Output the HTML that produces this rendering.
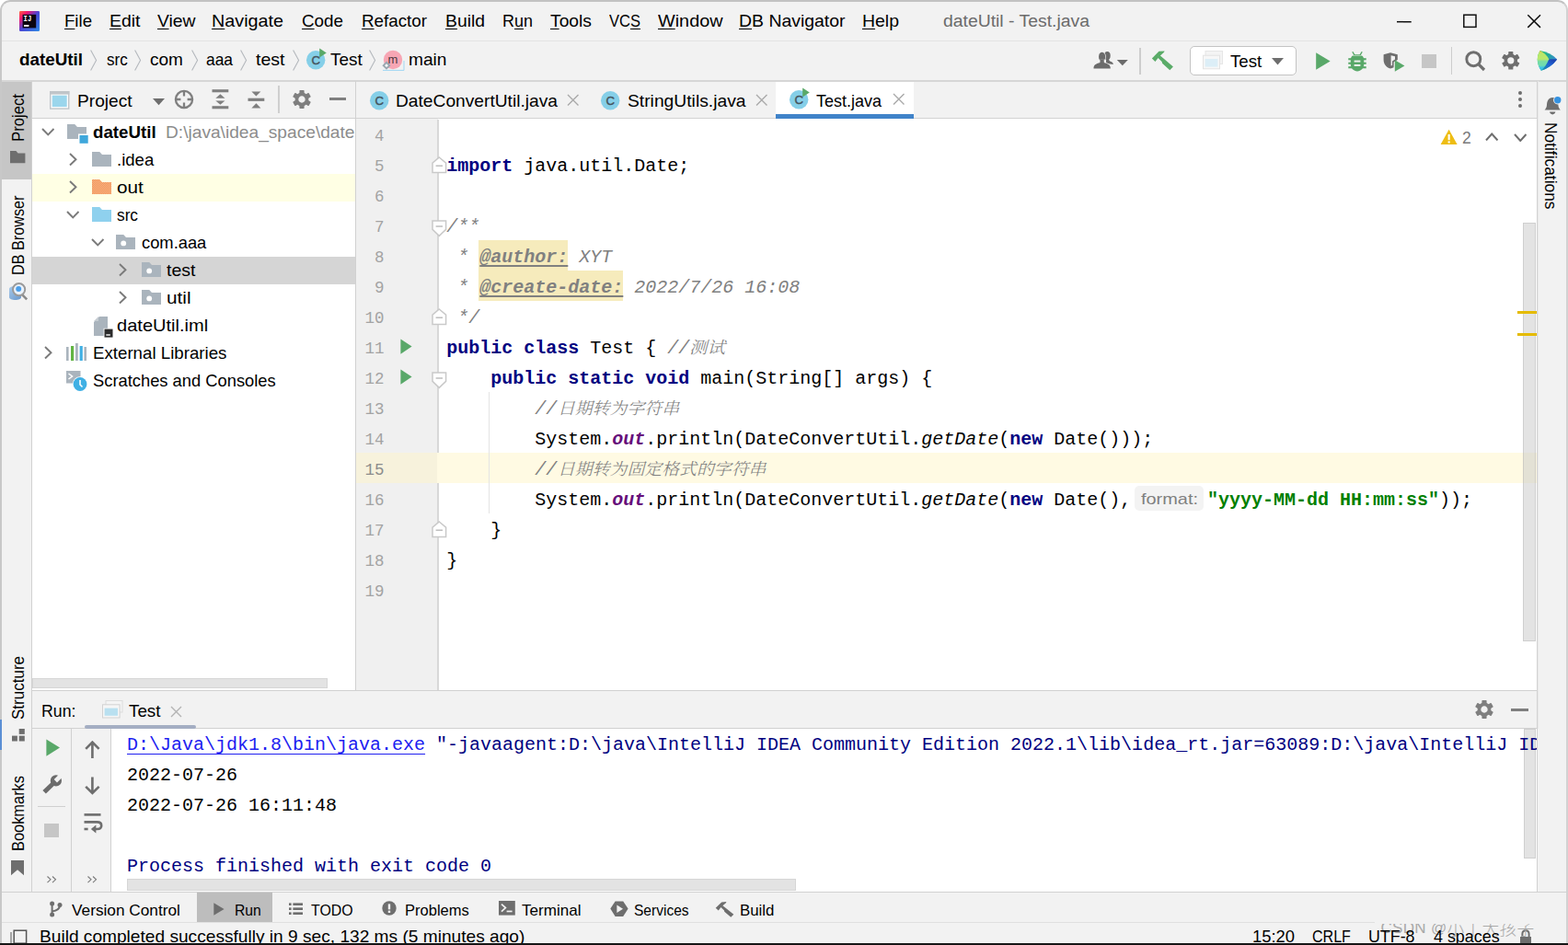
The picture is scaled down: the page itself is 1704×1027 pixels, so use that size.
<!DOCTYPE html>
<html lang="zh"><head><meta charset="utf-8"><title>dateUtil - Test.java</title>
<style>
html,body{margin:0;padding:0;background:#fff;}
body{width:1704px;height:1027px;overflow:hidden;position:relative;}
#win{position:absolute;left:0;top:0;width:1704px;height:1027px;overflow:hidden;background:#f2f2f2;border-radius:11px 11px 0 0;}
#win div,#win svg,#win span.t{position:absolute;}
span.t{white-space:pre;line-height:normal;transform-origin:0 0;}

</style></head>
<body>
<div id="win">
<div style="left:0px;top:44px;width:1704px;height:1px;background:#e3e3e3;"></div>
<div style="left:0px;top:87px;width:1704px;height:2px;background:#d6d6d6;"></div>
<div style="left:34px;top:88px;width:1px;height:882px;background:#d1d1d1;"></div>
<div style="left:2px;top:89px;width:32px;height:105.5px;background:#c6c6c6;"></div>
<div style="left:35px;top:128px;width:352px;height:1px;background:#d1d1d1;"></div>
<div style="left:35px;top:129px;width:351px;height:621px;background:#fff;"></div>
<div style="left:386px;top:88px;width:1px;height:663px;background:#d1d1d1;"></div>
<div style="left:35px;top:189px;width:351px;height:30px;background:#ffffe4;"></div>
<div style="left:35px;top:279px;width:351px;height:30px;background:#d5d5d5;"></div>
<div style="left:35px;top:735px;width:351px;height:15px;background:#fff;"></div>
<div style="left:35px;top:737px;width:321px;height:11px;background:#e3e3e3;border:1px solid #d6d6d6;box-sizing:border-box;"></div>
<div style="left:35px;top:750px;width:1636px;height:1px;background:#d1d1d1;"></div>
<div style="left:387px;top:128px;width:1284px;height:2px;background:#d3d3d3;"></div>
<div style="left:843px;top:89px;width:150px;height:35px;background:#fff;"></div>
<div style="left:843px;top:124px;width:150px;height:5px;background:#4083c9;"></div>
<div style="left:387px;top:129px;width:1284px;height:621px;background:#fff;"></div>
<div style="left:387px;top:129px;width:89px;height:621px;background:#f0f0f0;"></div>
<div style="left:475px;top:130px;width:2px;height:620px;background:#d8d8d8;"></div>
<div style="left:387px;top:492px;width:1283px;height:33px;background:#fffae3;"></div>
<div style="left:387px;top:492px;width:88px;height:33px;background:#f7f2dc;"></div>
<div style="left:531px;top:426px;width:1px;height:132px;background:#e4e4e4;"></div>
<div style="left:520px;top:261px;width:97px;height:33px;background:#f6ebbc;"></div>
<div style="left:520px;top:294px;width:157px;height:33px;background:#f6ebbc;"></div>
<div style="left:1233px;top:528px;width:75px;height:27px;background:#f3f3f3;border-radius:5px;"></div>
<div style="left:1655px;top:242px;width:14px;height:455px;background:rgba(200,200,200,0.5);border:1px solid rgba(170,170,170,0.35);box-sizing:border-box;"></div>
<div style="left:1649px;top:338px;width:21px;height:3px;background:#e5bb00;"></div>
<div style="left:1649px;top:362px;width:21px;height:3px;background:#e5bb00;"></div>
<div style="left:1670px;top:88px;width:1px;height:882px;background:#d3d3d3;"></div>
<div style="left:1671px;top:88px;width:1px;height:882px;background:#e8e8e8;"></div>
<div style="left:35px;top:791px;width:1636px;height:1px;background:#d1d1d1;"></div>
<div style="left:77px;top:792px;width:1px;height:177px;background:#d1d1d1;"></div>
<div style="left:120px;top:792px;width:1px;height:177px;background:#d1d1d1;"></div>
<div style="left:121px;top:792px;width:1549px;height:177px;background:#fff;"></div>
<div style="left:92px;top:788px;width:121px;height:4px;background:#a4aec3;border-radius:2px;"></div>
<div style="left:41px;top:876px;width:30px;height:1px;background:#cfcfcf;"></div>
<div style="left:1656px;top:792px;width:13px;height:141px;background:rgba(200,200,200,0.5);border:1px solid rgba(170,170,170,0.35);box-sizing:border-box;"></div>
<div style="left:138px;top:955px;width:727px;height:13px;background:#e3e3e3;border:1px solid #d6d6d6;box-sizing:border-box;"></div>
<div style="left:0px;top:969px;width:1704px;height:1px;background:#d1d1d1;"></div>
<div style="left:214px;top:970px;width:82px;height:32px;background:#bdbdbd;"></div>
<div style="left:0px;top:1002px;width:1494px;height:1px;background:#e0e0e0;"></div>
<div style="left:0px;top:1025px;width:1704px;height:2px;background:#161616;"></div>
<div style="left:1238.3px;top:51.5px;width:1.4px;height:29.5px;background:#cdcdcd;"></div>
<div style="left:1292.5px;top:50px;width:116px;height:32px;background:#fff;border:1.5px solid #c4c4c4;border-radius:5px;box-sizing:border-box;"></div>
<div style="left:1545.3px;top:58.5px;width:15.5px;height:15px;background:#c6c6c6;"></div>
<div style="left:1577px;top:51px;width:1.4px;height:30px;background:#cdcdcd;"></div>
<div style="left:302.3px;top:93px;width:1.4px;height:29.6px;background:#cfcfcf;"></div>
<div style="left:358px;top:106.2px;width:18px;height:3.2px;background:#7f7f7f;"></div>
<div style="left:1649.8px;top:98.8px;width:4.4px;height:4.4px;background:#6e6e6e;border-radius:50%;"></div>
<div style="left:1649.8px;top:105.7px;width:4.4px;height:4.4px;background:#6e6e6e;border-radius:50%;"></div>
<div style="left:1649.8px;top:112.6px;width:4.4px;height:4.4px;background:#6e6e6e;border-radius:50%;"></div>
<div style="left:1642px;top:769.5px;width:18.5px;height:3px;background:#7f7f7f;"></div>
<div style="left:48.2px;top:894.5px;width:15.6px;height:15px;background:#c6c6c6;"></div>
<svg style="left:45px;top:138.7px;" width="14.5" height="9" viewBox="0 0 14.5 9"><path d="M1 1 L7.25 7.5 L13.5 1" fill="none" stroke="#7a7a7a" stroke-width="1.9" stroke-linecap="butt"/></svg>
<svg style="left:72.5px;top:135px;" width="23" height="21" viewBox="0 0 23 21"><path d="M0 0 H8.2 L11 3 H21 V16 H0 Z" fill="#aab4bd"/><rect x="12.3" y="11" width="10.7" height="10" fill="#f2f2f2" opacity="0"/><rect x="12" y="10.5" width="11" height="10.5" fill="#fff"/><rect x="13.5" y="12" width="9.2" height="8.8" fill="#3fa7db"/></svg>
<svg style="left:75px;top:166px;" width="9" height="14.5" viewBox="0 0 9 14.5"><path d="M1 1 L7.5 7.25 L1 13.5" fill="none" stroke="#7a7a7a" stroke-width="1.9"/></svg>
<svg style="left:99.6px;top:165px;" width="21" height="16" viewBox="0 0 21 16"><path d="M0 0 H8.2 L11 3 H21 V16 H0 Z" fill="#aab4bd"/></svg>
<svg style="left:75px;top:196px;" width="9" height="14.5" viewBox="0 0 9 14.5"><path d="M1 1 L7.5 7.25 L1 13.5" fill="none" stroke="#7a7a7a" stroke-width="1.9"/></svg>
<svg style="left:99.6px;top:195px;" width="21" height="16" viewBox="0 0 21 16"><defs><pattern id="po" width="2" height="2" patternUnits="userSpaceOnUse"><rect width="2" height="2" fill="#f2975c"/><rect width="1" height="1" fill="#f7b183"/><rect x="1" y="1" width="1" height="1" fill="#f7b183"/></pattern></defs><path d="M0 0 H8.2 L11 3 H21 V16 H0 Z" fill="url(#po)"/></svg>
<svg style="left:72.3px;top:228.7px;" width="14.5" height="9" viewBox="0 0 14.5 9"><path d="M1 1 L7.25 7.5 L13.5 1" fill="none" stroke="#7a7a7a" stroke-width="1.9" stroke-linecap="butt"/></svg>
<svg style="left:99.6px;top:225px;" width="21" height="16" viewBox="0 0 21 16"><path d="M0 0 H8.2 L11 3 H21 V16 H0 Z" fill="#8fd1ee"/></svg>
<svg style="left:99px;top:258.8px;" width="14.5" height="9" viewBox="0 0 14.5 9"><path d="M1 1 L7.25 7.5 L13.5 1" fill="none" stroke="#7a7a7a" stroke-width="1.9" stroke-linecap="butt"/></svg>
<svg style="left:126.3px;top:255.3px;" width="21" height="16" viewBox="0 0 21 16"><path d="M0 0 H8.2 L11 3 H21 V16 H0 Z" fill="#aab4bd"/><circle cx="8.2" cy="9.4" r="2.9" fill="#fff"/></svg>
<svg style="left:128.6px;top:286px;" width="9" height="14.5" viewBox="0 0 9 14.5"><path d="M1 1 L7.5 7.25 L1 13.5" fill="none" stroke="#7a7a7a" stroke-width="1.9"/></svg>
<svg style="left:153.6px;top:285.2px;" width="21" height="16" viewBox="0 0 21 16"><path d="M0 0 H8.2 L11 3 H21 V16 H0 Z" fill="#aab4bd"/><circle cx="8.2" cy="9.4" r="2.9" fill="#fff"/></svg>
<svg style="left:128.6px;top:316px;" width="9" height="14.5" viewBox="0 0 9 14.5"><path d="M1 1 L7.5 7.25 L1 13.5" fill="none" stroke="#7a7a7a" stroke-width="1.9"/></svg>
<svg style="left:153.6px;top:315.2px;" width="21" height="16" viewBox="0 0 21 16"><path d="M0 0 H8.2 L11 3 H21 V16 H0 Z" fill="#aab4bd"/><circle cx="8.2" cy="9.4" r="2.9" fill="#fff"/></svg>
<svg style="left:102px;top:343.5px;" width="21" height="23" viewBox="0 0 21 23"><path d="M6 0 H15 V21 H0 V6 Z" fill="#aab4bd"/><path d="M0 5 L5 0 V5 Z" fill="#c5ccd2"/><rect x="10.5" y="12.5" width="10.5" height="10.5" fill="#f2f2f2" opacity="0"/><rect x="10.6" y="12.8" width="10" height="10" fill="#fff"/><rect x="11.5" y="13.6" width="9" height="9" fill="#2b2b2b"/><rect x="13.3" y="19.3" width="4.5" height="1.4" fill="#fff"/></svg>
<svg style="left:47.6px;top:376.3px;" width="9" height="14.5" viewBox="0 0 9 14.5"><path d="M1 1 L7.5 7.25 L1 13.5" fill="none" stroke="#7a7a7a" stroke-width="1.9"/></svg>
<svg style="left:72.4px;top:373px;" width="22" height="19" viewBox="0 0 22 19"><rect x="0" y="4" width="2.6" height="15" fill="#aab4bd"/><rect x="5" y="3" width="3.2" height="16" fill="#62b543"/><rect x="10" y="0" width="2.8" height="19" fill="#aab4bd"/><rect x="14.6" y="3" width="3.2" height="16" fill="#40b0e4"/><rect x="19.4" y="4" width="2.6" height="15" fill="#aab4bd"/></svg>
<svg style="left:72.4px;top:403px;" width="23" height="23" viewBox="0 0 23 23"><rect x="0" y="0" width="15.5" height="13.5" fill="#aab4bd"/><path d="M2.5 3 L6.5 6 L2.5 9" stroke="#fff" stroke-width="1.5" fill="none"/><circle cx="15" cy="14.5" r="8.3" fill="#fff"/><circle cx="15" cy="14.5" r="7.4" fill="#40b0e4"/><path d="M15 10 V15 L17.5 17.5" stroke="#fff" stroke-width="1.6" fill="none"/></svg>
<svg style="left:21px;top:12px;" width="22" height="22" viewBox="0 0 22 22"><defs><linearGradient id="ijg" x1="0" y1="0" x2="1" y2="1"><stop offset="0" stop-color="#fe6a3a"/><stop offset="0.22" stop-color="#f3156f"/><stop offset="0.5" stop-color="#4a46d6"/><stop offset="1" stop-color="#2f8be6"/></linearGradient></defs><rect width="22" height="22" rx="1.2" fill="url(#ijg)"/><rect x="3.6" y="3.8" width="14.6" height="14.6" fill="#0b0410"/><rect x="5" y="15" width="5.4" height="1.9" fill="#fff"/><text x="4.6" y="11.3" font-family="Liberation Mono,monospace" font-weight="bold" font-size="8.6" fill="#fff" textLength="8.6" lengthAdjust="spacingAndGlyphs">IJ</text></svg>
<svg style="left:1517px;top:14px;" width="160" height="18" viewBox="0 0 160 18"><path d="M1 9.7 H16.7" stroke="#111" stroke-width="1.5"/><rect x="73.8" y="2.2" width="13.2" height="13.2" fill="none" stroke="#111" stroke-width="1.5"/><path d="M143.3 2.2 L157 15.9 M157 2.2 L143.3 15.9" stroke="#111" stroke-width="1.5"/></svg>
<svg style="left:98px;top:54px;" width="8" height="23" viewBox="0 0 8 23"><path d="M0.6 0.5 L6.6 11.5 L0.6 22.5" fill="none" stroke="#b4b8bd" stroke-width="1.1"/></svg>
<svg style="left:146px;top:54px;" width="8" height="23" viewBox="0 0 8 23"><path d="M0.6 0.5 L6.6 11.5 L0.6 22.5" fill="none" stroke="#b4b8bd" stroke-width="1.1"/></svg>
<svg style="left:207.5px;top:54px;" width="8" height="23" viewBox="0 0 8 23"><path d="M0.6 0.5 L6.6 11.5 L0.6 22.5" fill="none" stroke="#b4b8bd" stroke-width="1.1"/></svg>
<svg style="left:260.7px;top:54px;" width="8" height="23" viewBox="0 0 8 23"><path d="M0.6 0.5 L6.6 11.5 L0.6 22.5" fill="none" stroke="#b4b8bd" stroke-width="1.1"/></svg>
<svg style="left:317.5px;top:54px;" width="8" height="23" viewBox="0 0 8 23"><path d="M0.6 0.5 L6.6 11.5 L0.6 22.5" fill="none" stroke="#b4b8bd" stroke-width="1.1"/></svg>
<svg style="left:401.2px;top:54px;" width="8" height="23" viewBox="0 0 8 23"><path d="M0.6 0.5 L6.6 11.5 L0.6 22.5" fill="none" stroke="#b4b8bd" stroke-width="1.1"/></svg>
<svg style="left:331.8px;top:51.8px;" width="24.4" height="24.4" viewBox="0 0 24.4 24.4"><circle cx="11.2" cy="13.2" r="10.2" fill="#85cfe8"/><text x="11.2" y="17.95" text-anchor="middle" font-family="Liberation Sans,sans-serif" font-size="13.2" fill="#46545e" stroke="#46545e" stroke-width="0.45">C</text><path d="M15.2 0.6 L22.799999999999997 5.6 L15.2 10.6 Z" fill="#5aa968"/></svg>
<svg style="left:414px;top:53px;" width="27" height="25" viewBox="0 0 27 25"><circle cx="13" cy="12" r="10.2" fill="#f7a6b4"/><text x="13" y="16" text-anchor="middle" font-family="Liberation Sans,sans-serif" font-size="13" fill="#4a3a40">m</text><path d="M2 23.4 H25 V13" fill="none" stroke="#9fd6f3" stroke-width="1"/><path d="M6 13.6 L10.6 18.2 L6 22.8 L1.4 18.2 Z" fill="#9aa7b0"/><path d="M6 16.3 L7.9 18.2 L6 20.1 L4.1 18.2 Z" fill="#fff"/></svg>
<svg style="left:1188px;top:56px;" width="40" height="20" viewBox="0 0 40 20"><g fill="#6b6b6b"><ellipse cx="15.3" cy="4.6" rx="3.4" ry="4.5"/><path d="M14 8 L17 7.6 C17 9.6 17.6 10.4 19.4 11 C21 11.6 21.8 12.6 21.8 13.9 L14 13 Z"/><g stroke="#f2f2f2" stroke-width="1.3" paint-order="stroke"><ellipse cx="9.6" cy="5.7" rx="3.6" ry="5"/><path d="M0.5 18.4 C0.5 14.6 2.6 13.4 7.6 12 L8 9.4 H11.2 L11.6 12 C16.6 13.4 18.8 14.6 18.8 18.4 Z"/></g><rect x="7.6" y="8.6" width="4" height="3.4"/><path d="M25.8 9 H37.8 L31.8 15.2 Z"/></g></svg>
<svg style="left:1251px;top:54px;" width="25" height="23" viewBox="0 0 25 23"><path d="M0.85 9.6 L8.45 1.85 L14.6 1.4 L14 2.7 L9.9 6.5 L15.5 11.2 L23.9 18.5 L20.3 22.2 L12 14.7 L11.8 13.25 L7.6 8.9 L4.4 13 Z" fill="#5aab68"/></svg>
<svg style="left:1307px;top:54.5px;" width="23" height="21" viewBox="0 0 23 21"><rect x="3" y="0.5" width="18.5" height="14" fill="#f4f4f4" stroke="#e6e6e6"/><rect x="0.5" y="5.2" width="18" height="14.6" fill="#f7f7f7" stroke="#e3e3e3"/><rect x="2.6" y="9" width="13.8" height="8.6" fill="#dceef7"/></svg>
<svg style="left:1381.5px;top:62.8px;" width="14" height="8" viewBox="0 0 14 8"><path d="M0 0 H13 L6.5 7.4 Z" fill="#6e6e6e"/></svg>
<svg style="left:1429.5px;top:56.5px;" width="17" height="20" viewBox="0 0 17 20"><path d="M0.2 0.3 L15.6 9.5 L0.2 18.7 Z" fill="#59a869"/></svg>
<svg style="left:1465px;top:55.5px;" width="20" height="22" viewBox="0 0 20 22"><g fill="#59a869"><path d="M4.2 0.6 L5.4 0 L7.4 3.2 H12.6 L14.6 0 L15.8 0.6 L13.8 4 H6.2 Z"/><path d="M5 4.4 H15 C16.6 5.4 17.2 7 17.2 9 V14 C17.2 18 14 21.4 10 21.4 C6 21.4 2.8 18 2.8 14 V9 C2.8 7 3.4 5.4 5 4.4 Z"/><rect x="0.3" y="7.2" width="19.4" height="2.1"/><rect x="0.3" y="11.7" width="19.4" height="2.1"/><rect x="0.3" y="16.2" width="19.4" height="2.1"/></g><rect x="6.6" y="9.6" width="6.8" height="1.9" fill="#f2f2f2"/><rect x="6.6" y="14" width="6.8" height="1.9" fill="#f2f2f2"/></svg>
<svg style="left:1502.5px;top:57px;" width="25" height="22" viewBox="0 0 25 22"><path d="M8 0.2 L15.8 2.2 V8 L11.6 10.4 V16.2 C10.4 16.9 9.2 17.3 8 17.6 C3.6 16.2 0.6 12.8 0.6 8 V2.2 Z" fill="#6e6e6e"/><path d="M8.6 3.2 L13 4.2 V7.6 L10 9.4 V14 L8.6 14.6 Z" fill="#f2f2f2"/><path d="M12.8 8.2 L23.4 14.5 L12.8 20.8 Z" fill="#59a869"/></svg>
<svg style="left:1591px;top:54px;" width="24" height="24" viewBox="0 0 24 24"><circle cx="10.3" cy="10.2" r="7.5" fill="none" stroke="#6e6e6e" stroke-width="2.9"/><path d="M15.6 15.6 L22 22" stroke="#6e6e6e" stroke-width="3.2"/></svg>
<svg style="left:1631.2px;top:55.2px;" width="21.6" height="21.6" viewBox="0 0 21.6 21.6"><g transform="translate(10.8 10.8)" fill="#6e6e6e"><rect x="-2.55" y="-9.80" width="5.10" height="4.90" rx="0.7" transform="rotate(0)"/><rect x="-2.55" y="-9.80" width="5.10" height="4.90" rx="0.7" transform="rotate(60)"/><rect x="-2.55" y="-9.80" width="5.10" height="4.90" rx="0.7" transform="rotate(120)"/><rect x="-2.55" y="-9.80" width="5.10" height="4.90" rx="0.7" transform="rotate(180)"/><rect x="-2.55" y="-9.80" width="5.10" height="4.90" rx="0.7" transform="rotate(240)"/><rect x="-2.55" y="-9.80" width="5.10" height="4.90" rx="0.7" transform="rotate(300)"/><circle r="5.44" fill="none" stroke="#6e6e6e" stroke-width="3.63"/></g></svg>
<svg style="left:1669.5px;top:54px;" width="24" height="24" viewBox="0 0 24 24"><defs><linearGradient id="cwa" x1="0" y1="0" x2="0" y2="1"><stop offset="0" stop-color="#f2bc3c"/><stop offset="0.14" stop-color="#b9e86c"/><stop offset="0.42" stop-color="#b9e86c"/><stop offset="0.54" stop-color="#76dca6"/><stop offset="0.74" stop-color="#6fdcae"/><stop offset="0.84" stop-color="#3fc3e4"/><stop offset="1" stop-color="#31bdea"/></linearGradient><linearGradient id="cwb" x1="0" y1="0" x2="1" y2="0.5"><stop offset="0" stop-color="#3ad868"/><stop offset="0.5" stop-color="#1fa996"/><stop offset="1" stop-color="#3b84dc"/></linearGradient><linearGradient id="cwd" x1="1" y1="0" x2="0" y2="1"><stop offset="0" stop-color="#1b36a0"/><stop offset="0.45" stop-color="#1f5fd2"/><stop offset="1" stop-color="#1aa0a8"/></linearGradient></defs><path d="M3.5 1 Q14.5 2.5 22.2 10.5 Q15.5 19.5 4.8 22.8 Q-2.6 11 3.5 1 Z" fill="url(#cwb)"/><path d="M13.2 10.3 L22.2 10.5 Q15.5 19.5 4.8 22.8 Q10.5 17.5 13.2 10.3 Z" fill="url(#cwd)"/><path d="M3.5 1 Q10.5 4.5 13.2 10.3 Q10.5 17.5 4.8 22.8 Q-2.6 11 3.5 1 Z" fill="url(#cwa)"/></svg>
<svg style="left:54px;top:98.5px;" width="22" height="20" viewBox="0 0 22 20"><rect x="0.7" y="0.7" width="20" height="18.4" fill="#fdfdfd" stroke="#c0c5c9" stroke-width="1.4"/><rect x="0" y="0" width="21.4" height="3.6" fill="#c0c5c9"/><rect x="2.7" y="4.7" width="16" height="12.4" fill="#9bd6ec"/></svg>
<svg style="left:166.3px;top:106.8px;" width="14" height="8" viewBox="0 0 14 8"><path d="M0 0 H13 L6.5 7.2 Z" fill="#6e6e6e"/></svg>
<svg style="left:189px;top:96.8px;" width="22" height="22" viewBox="0 0 22 22"><g fill="none" stroke="#7f7f7f" stroke-width="2.3"><circle cx="11" cy="11" r="9.1"/><path d="M11 1.8 V7.4 M11 14.6 V20.2 M1.8 11 H7.4 M14.6 11 H20.2"/></g></svg>
<svg style="left:229.5px;top:97px;" width="19" height="22" viewBox="0 0 19 22"><g fill="#7f7f7f"><rect x="0.5" y="0.2" width="17.8" height="3.1"/><rect x="0.5" y="18.2" width="17.8" height="3.1"/><path d="M9.4 5.3 L14.5 9.8 H4.3 Z"/><path d="M4.3 12.5 H14.5 L9.4 16.8 Z"/></g></svg>
<svg style="left:268.5px;top:98.5px;" width="19" height="19" viewBox="0 0 19 19"><g fill="#7f7f7f"><rect x="0.5" y="7.7" width="17.8" height="3.2"/><path d="M4.4 0.5 H14.4 L9.4 5.5 Z"/><path d="M9.4 13.2 L14.4 18.4 H4.4 Z"/></g></svg>
<svg style="left:317px;top:96.9px;" width="22" height="22" viewBox="0 0 22 22"><g transform="translate(11 11)" fill="#7f7f7f"><rect x="-2.60" y="-10.00" width="5.20" height="5.00" rx="0.7" transform="rotate(0)"/><rect x="-2.60" y="-10.00" width="5.20" height="5.00" rx="0.7" transform="rotate(60)"/><rect x="-2.60" y="-10.00" width="5.20" height="5.00" rx="0.7" transform="rotate(120)"/><rect x="-2.60" y="-10.00" width="5.20" height="5.00" rx="0.7" transform="rotate(180)"/><rect x="-2.60" y="-10.00" width="5.20" height="5.00" rx="0.7" transform="rotate(240)"/><rect x="-2.60" y="-10.00" width="5.20" height="5.00" rx="0.7" transform="rotate(300)"/><circle r="5.55" fill="none" stroke="#7f7f7f" stroke-width="3.70"/></g></svg>
<svg style="left:401.3px;top:95.8px;" width="24.4" height="24.4" viewBox="0 0 24.4 24.4"><circle cx="11.2" cy="13.2" r="10.2" fill="#85cfe8"/><text x="11.2" y="17.95" text-anchor="middle" font-family="Liberation Sans,sans-serif" font-size="13.2" fill="#46545e" stroke="#46545e" stroke-width="0.45">C</text></svg>
<svg style="left:652.0999999999999px;top:95.8px;" width="24.4" height="24.4" viewBox="0 0 24.4 24.4"><circle cx="11.2" cy="13.2" r="10.2" fill="#85cfe8"/><text x="11.2" y="17.95" text-anchor="middle" font-family="Liberation Sans,sans-serif" font-size="13.2" fill="#46545e" stroke="#46545e" stroke-width="0.45">C</text></svg>
<svg style="left:856.8px;top:95.0px;" width="24.4" height="24.4" viewBox="0 0 24.4 24.4"><circle cx="11.2" cy="13.2" r="10.2" fill="#85cfe8"/><text x="11.2" y="17.95" text-anchor="middle" font-family="Liberation Sans,sans-serif" font-size="13.2" fill="#46545e" stroke="#46545e" stroke-width="0.45">C</text><path d="M15.2 0.6 L22.799999999999997 5.6 L15.2 10.6 Z" fill="#5aa968"/></svg>
<svg style="left:616px;top:101.5px;" width="13.5" height="13.5" viewBox="0 0 13.5 13.5"><path d="M1 1 L12.5 12.5 M12.5 1 L1 12.5" stroke="#a9a9a9" stroke-width="1.4"/></svg>
<svg style="left:821px;top:101.5px;" width="13.5" height="13.5" viewBox="0 0 13.5 13.5"><path d="M1 1 L12.5 12.5 M12.5 1 L1 12.5" stroke="#a9a9a9" stroke-width="1.4"/></svg>
<svg style="left:969.6px;top:101.4px;" width="13.5" height="13.5" viewBox="0 0 13.5 13.5"><path d="M1 1 L12.5 12.5 M12.5 1 L1 12.5" stroke="#a9a9a9" stroke-width="1.4"/></svg>
<svg style="left:1676.7px;top:104px;" width="21" height="22" viewBox="0 0 21 22"><path d="M10.2 2 C14.6 2 16.2 6 16.4 10 C16.6 13 17.6 14 18.8 15.6 H1.6 C2.8 14 3.8 13 4 10 C4.2 6 5.8 2 10.2 2 Z" fill="#6e6e6e"/><path d="M7 17.6 H13.4 C13 19.4 11.8 20.4 10.2 20.4 C8.6 20.4 7.4 19.4 7 17.6 Z" fill="#6e6e6e"/><circle cx="15.7" cy="4.8" r="4.6" fill="#f2f2f2"/><circle cx="15.7" cy="4.8" r="3.7" fill="#3592e0"/></svg>
<svg style="left:469px;top:169.5px;" width="17" height="19" viewBox="0 0 17 19"><path d="M8.3 1 L15.6 7.2 V17.6 H1 V7.2 Z" fill="#fff" stroke="#c9c9c9" stroke-width="1.5"/><path d="M4.6 10.2 H12" stroke="#b9b9b9" stroke-width="1.4"/></svg>
<svg style="left:469px;top:239px;" width="17" height="19" viewBox="0 0 17 19"><path d="M1 1 H15.6 V10.4 L8.3 17.4 L1 10.4 Z" fill="#fff" stroke="#c9c9c9" stroke-width="1.5"/><path d="M4.6 7 H12" stroke="#b9b9b9" stroke-width="1.4"/></svg>
<svg style="left:469px;top:334.5px;" width="17" height="19" viewBox="0 0 17 19"><path d="M8.3 1 L15.6 7.2 V17.6 H1 V7.2 Z" fill="#fff" stroke="#c9c9c9" stroke-width="1.5"/><path d="M4.6 10.2 H12" stroke="#b9b9b9" stroke-width="1.4"/></svg>
<svg style="left:469px;top:404px;" width="17" height="19" viewBox="0 0 17 19"><path d="M1 1 H15.6 V10.4 L8.3 17.4 L1 10.4 Z" fill="#fff" stroke="#c9c9c9" stroke-width="1.5"/><path d="M4.6 7 H12" stroke="#b9b9b9" stroke-width="1.4"/></svg>
<svg style="left:469px;top:565.5px;" width="17" height="19" viewBox="0 0 17 19"><path d="M8.3 1 L15.6 7.2 V17.6 H1 V7.2 Z" fill="#fff" stroke="#c9c9c9" stroke-width="1.5"/><path d="M4.6 10.2 H12" stroke="#b9b9b9" stroke-width="1.4"/></svg>
<svg style="left:434.8px;top:367.6px;" width="14" height="18" viewBox="0 0 14 18"><path d="M0.4 0.4 L12.6 8.6 L0.4 16.8 Z" fill="#59a869"/></svg>
<svg style="left:434.8px;top:400.6px;" width="14" height="18" viewBox="0 0 14 18"><path d="M0.4 0.4 L12.6 8.6 L0.4 16.8 Z" fill="#59a869"/></svg>
<svg style="left:1564.5px;top:139.5px;" width="20" height="18" viewBox="0 0 20 18"><path d="M9.6 0.8 L18.6 17 H0.6 Z" fill="#eebd14"/><rect x="8.6" y="6" width="2.1" height="6.2" fill="#fff"/><rect x="8.6" y="13.4" width="2.1" height="2.1" fill="#fff"/></svg>
<svg style="left:1614px;top:143.8px;" width="14.5" height="9.5" viewBox="0 0 14.5 9.5"><path d="M1 8.5 L7.25 1.5 L13.5 8.5" fill="none" stroke="#6e6e6e" stroke-width="2"/></svg>
<svg style="left:1644.8px;top:144.6px;" width="14.5" height="9.5" viewBox="0 0 14.5 9.5"><path d="M1 1 L7.25 8.0 L13.5 1" fill="none" stroke="#6e6e6e" stroke-width="2" stroke-linecap="butt"/></svg>
<svg style="left:111px;top:760.5px;" width="23" height="20" viewBox="0 0 23 20"><rect x="4" y="0.5" width="18" height="12.5" fill="#f4f4f4" stroke="#dcdcdc"/><rect x="0.5" y="4.8" width="18.6" height="14.2" fill="#f6f6f6" stroke="#d2d2d2"/><rect x="2.6" y="8.6" width="14.4" height="8.2" fill="#b9e0f0"/></svg>
<svg style="left:184.5px;top:767px;" width="13" height="13" viewBox="0 0 13 13"><path d="M1 1 L12 12 M12 1 L1 12" stroke="#b3b3b3" stroke-width="1.4"/></svg>
<svg style="left:1601.6px;top:759.6px;" width="22" height="22" viewBox="0 0 22 22"><g transform="translate(11 11)" fill="#7f7f7f"><rect x="-2.60" y="-10.00" width="5.20" height="5.00" rx="0.7" transform="rotate(0)"/><rect x="-2.60" y="-10.00" width="5.20" height="5.00" rx="0.7" transform="rotate(60)"/><rect x="-2.60" y="-10.00" width="5.20" height="5.00" rx="0.7" transform="rotate(120)"/><rect x="-2.60" y="-10.00" width="5.20" height="5.00" rx="0.7" transform="rotate(180)"/><rect x="-2.60" y="-10.00" width="5.20" height="5.00" rx="0.7" transform="rotate(240)"/><rect x="-2.60" y="-10.00" width="5.20" height="5.00" rx="0.7" transform="rotate(300)"/><circle r="5.55" fill="none" stroke="#7f7f7f" stroke-width="3.70"/></g></svg>
<svg style="left:49.5px;top:803px;" width="16" height="20" viewBox="0 0 16 20"><path d="M0.4 0.4 L15 9.6 L0.4 18.8 Z" fill="#59a869"/></svg>
<svg style="left:45.5px;top:841.5px;" width="23" height="22" viewBox="0 0 23 22"><g fill="#6b6b6b"><circle cx="14.9" cy="6.4" r="6.1"/><path d="M0.4 17.1 L9.6 8.2 L13.2 11.6 L3.9 20.6 Z"/></g><path d="M12.7 5.1 L16 8.5 L22.5 2 L19.2 -1.4 Z" fill="#f2f2f2"/></svg>
<svg style="left:51.4px;top:951.5px;" width="12" height="8" viewBox="0 0 12 8"><path d="M0.5 0.5 L4 3.8 L0.5 7.1 M6 0.5 L9.5 3.8 L6 7.1" fill="none" stroke="#7a7a7a" stroke-width="1.1"/></svg>
<svg style="left:95.4px;top:951.5px;" width="12" height="8" viewBox="0 0 12 8"><path d="M0.5 0.5 L4 3.8 L0.5 7.1 M6 0.5 L9.5 3.8 L6 7.1" fill="none" stroke="#7a7a7a" stroke-width="1.1"/></svg>
<svg style="left:92px;top:805px;" width="17" height="20" viewBox="0 0 17 20"><path d="M8.4 1.6 V19 M1.2 8.8 L8.4 1.6 L15.6 8.8" fill="none" stroke="#6e6e6e" stroke-width="2.6"/></svg>
<svg style="left:92px;top:844px;" width="17" height="20" viewBox="0 0 17 20"><path d="M8.4 0.5 V18 M1.2 10.8 L8.4 18 L15.6 10.8" fill="none" stroke="#6e6e6e" stroke-width="2.6"/></svg>
<svg style="left:90.5px;top:883.5px;" width="21" height="22" viewBox="0 0 21 22"><g fill="none" stroke="#6e6e6e" stroke-width="2.6"><path d="M0.5 1.4 H18.5"/><path d="M0.5 9.4 H14.6 C17.4 9.4 19.2 11 19.2 13.2 C19.2 15.4 17.4 17 14.6 17 H9.6"/><path d="M0.5 17 H4.6"/></g><path d="M13.4 12.6 V21.4 L7.8 17 Z" fill="#6e6e6e"/></svg>
<svg style="left:52.5px;top:978.5px;" width="16" height="18" viewBox="0 0 16 18"><g fill="none" stroke="#6e6e6e" stroke-width="2"><path d="M3.6 3 V15 M3.6 11.4 C9.6 10.6 11.8 9 12 5.4"/></g><circle cx="3.6" cy="2.9" r="2.5" fill="#6e6e6e"/><circle cx="3.6" cy="15" r="2.5" fill="#6e6e6e"/><circle cx="12" cy="4.6" r="2.5" fill="#6e6e6e"/></svg>
<svg style="left:231.6px;top:980.8px;" width="13" height="15" viewBox="0 0 13 15"><path d="M0.3 0.3 L11.6 7 L0.3 13.7 Z" fill="#6e6e6e"/></svg>
<svg style="left:314px;top:981px;" width="16" height="14" viewBox="0 0 16 14"><g fill="#6e6e6e"><rect x="0" y="0.4" width="2.6" height="2.6"/><rect x="4.4" y="0.4" width="10.6" height="2.6"/><rect x="0" y="5.4" width="2.6" height="2.6"/><rect x="4.4" y="5.4" width="10.6" height="2.6"/><rect x="0" y="10.4" width="2.6" height="2.6"/><rect x="4.4" y="10.4" width="10.6" height="2.6"/></g></svg>
<svg style="left:415px;top:979px;" width="16" height="16" viewBox="0 0 16 16"><circle cx="8" cy="8" r="7.7" fill="#6e6e6e"/><rect x="6.8" y="3.4" width="2.4" height="6" fill="#f2f2f2"/><rect x="6.8" y="10.6" width="2.4" height="2.4" fill="#f2f2f2"/></svg>
<svg style="left:541.5px;top:979.2px;" width="18" height="16" viewBox="0 0 18 16"><rect x="0" y="0" width="17.8" height="15.6" fill="#6e6e6e"/><path d="M3 3.6 L7.4 7.6 L3 11.6" fill="none" stroke="#f2f2f2" stroke-width="1.7"/><rect x="8.6" y="10.6" width="6" height="1.7" fill="#f2f2f2"/></svg>
<svg style="left:663px;top:979px;" width="20" height="18" viewBox="0 0 20 18"><path d="M5.6 0.4 H14.2 L19.6 8.6 L14.2 17 H5.6 L0.3 8.6 Z" fill="#6e6e6e"/><path d="M7.4 4.4 L14 8.7 L7.4 13 Z" fill="#f2f2f2"/></svg>
<svg style="left:776.6px;top:978.6px;" width="21" height="19" viewBox="0 0 21 19"><path d="M0.85 9.6 L8.45 1.85 L14.6 1.4 L14 2.7 L9.9 6.5 L15.5 11.2 L23.9 18.5 L20.3 22.2 L12 14.7 L11.8 13.25 L7.6 8.9 L4.4 13 Z" fill="#6e6e6e" transform="scale(0.85 0.8)"/></svg>
<svg style="left:10.7px;top:1008.7px;" width="20" height="16" viewBox="0 0 20 16"><path d="M1 4 V16" stroke="#6e6e6e" stroke-width="1.2"/><rect x="4.2" y="2.2" width="13.4" height="14" fill="none" stroke="#555" stroke-width="1.5"/></svg>
<svg style="left:1651px;top:1008.7px;" width="14" height="19" viewBox="0 0 14 19"><path d="M3.4 9 V6 C3.4 3.6 5 2.2 7 2.2 C9 2.2 10.6 3.6 10.6 6 V9" fill="none" stroke="#6e6e6e" stroke-width="2"/><rect x="1" y="9" width="12" height="10" fill="#6e6e6e"/></svg>
<svg style="left:11px;top:164px;" width="17" height="14" viewBox="0 0 17 14"><path d="M0 0 H6.4 L8.6 2.4 H16.4 V13.2 H0 Z" fill="#6e6e6e"/></svg>
<svg style="left:8.5px;top:305.5px;" width="22" height="21" viewBox="0 0 22 21"><defs><linearGradient id="dbg" x1="0" y1="0" x2="1" y2="1"><stop offset="0" stop-color="#9dc3e8"/><stop offset="1" stop-color="#4f87c4"/></linearGradient></defs><path d="M1 8 C1 6 4 5 7.5 5 C11 5 14 6 14 8 V17 C14 19 11 20 7.5 20 C4 20 1 19 1 17 Z" fill="url(#dbg)" opacity="0.85"/><path d="M15 14.2 L20.2 19.4" stroke="#8a8a8a" stroke-width="2.6"/><circle cx="11.6" cy="8.6" r="6.6" fill="#eaf2fb" stroke="#9a9a9a" stroke-width="2"/><circle cx="11.2" cy="8" r="3" fill="#4b9fea"/></svg>
<svg style="left:12.5px;top:792px;" width="14" height="14" viewBox="0 0 14 14"><g fill="#6e6e6e"><rect x="7.7" y="0" width="6.1" height="5.9"/><rect x="0" y="7.6" width="5.9" height="5.9"/><rect x="7.7" y="7.6" width="6.1" height="5.9"/></g></svg>
<svg style="left:12.3px;top:934.7px;" width="14" height="17" viewBox="0 0 14 17"><path d="M0 0 H14 V16.3 L7 10.2 L0 16.3 Z" fill="#6e6e6e"/></svg>
<div style="left:1496px;top:1004px;width:176px;height:16px;overflow:hidden;"><span style="position:absolute;left:4.5px;top:-7.7px;white-space:pre;font-family:'Liberation Sans','Noto Sans CJK SC',sans-serif;font-size:17px;font-weight:300;line-height:24px;color:#a9a9a9;letter-spacing:0.3px;">CSDN @<span style="font-size:18.7px;position:relative;top:1.6px">小丨大孩子</span></span></div>
<span class="t" style="left:70px;top:12.2px;font-size:19px;color:#000;font-family:'Liberation Sans','Noto Sans CJK SC',sans-serif;transform:scaleX(0.9796);text-underline-offset:1.6px;text-decoration-thickness:1.8px;"><u>F</u>ile</span>
<span class="t" style="left:119px;top:12.2px;font-size:19px;color:#000;font-family:'Liberation Sans','Noto Sans CJK SC',sans-serif;transform:scaleX(1.0224);text-underline-offset:1.6px;text-decoration-thickness:1.8px;"><u>E</u>dit</span>
<span class="t" style="left:171px;top:12.2px;font-size:19px;color:#000;font-family:'Liberation Sans','Noto Sans CJK SC',sans-serif;transform:scaleX(1.0157);text-underline-offset:1.6px;text-decoration-thickness:1.8px;"><u>V</u>iew</span>
<span class="t" style="left:230px;top:12.2px;font-size:19px;color:#000;font-family:'Liberation Sans','Noto Sans CJK SC',sans-serif;transform:scaleX(1.0398);text-underline-offset:1.6px;text-decoration-thickness:1.8px;"><u>N</u>avigate</span>
<span class="t" style="left:327.5px;top:12.2px;font-size:19px;color:#000;font-family:'Liberation Sans','Noto Sans CJK SC',sans-serif;transform:scaleX(0.9904);text-underline-offset:1.6px;text-decoration-thickness:1.8px;"><u>C</u>ode</span>
<span class="t" style="left:392.5px;top:12.2px;font-size:19px;color:#000;font-family:'Liberation Sans','Noto Sans CJK SC',sans-serif;transform:scaleX(0.9885);text-underline-offset:1.6px;text-decoration-thickness:1.8px;"><u>R</u>efactor</span>
<span class="t" style="left:483.5px;top:12.2px;font-size:19px;color:#000;font-family:'Liberation Sans','Noto Sans CJK SC',sans-serif;transform:scaleX(1.0174);text-underline-offset:1.6px;text-decoration-thickness:1.8px;"><u>B</u>uild</span>
<span class="t" style="left:545.5px;top:12.2px;font-size:19px;color:#000;font-family:'Liberation Sans','Noto Sans CJK SC',sans-serif;transform:scaleX(0.9458);text-underline-offset:1.6px;text-decoration-thickness:1.8px;">R<u>u</u>n</span>
<span class="t" style="left:597.5px;top:12.2px;font-size:19px;color:#000;font-family:'Liberation Sans','Noto Sans CJK SC',sans-serif;transform:scaleX(1.0144);text-underline-offset:1.6px;text-decoration-thickness:1.8px;"><u>T</u>ools</span>
<span class="t" style="left:661.5px;top:12.2px;font-size:19px;color:#000;font-family:'Liberation Sans','Noto Sans CJK SC',sans-serif;transform:scaleX(0.8697);text-underline-offset:1.6px;text-decoration-thickness:1.8px;">VC<u>S</u></span>
<span class="t" style="left:715px;top:12.2px;font-size:19px;color:#000;font-family:'Liberation Sans','Noto Sans CJK SC',sans-serif;transform:scaleX(1.0430);text-underline-offset:1.6px;text-decoration-thickness:1.8px;"><u>W</u>indow</span>
<span class="t" style="left:803px;top:12.2px;font-size:19px;color:#000;font-family:'Liberation Sans','Noto Sans CJK SC',sans-serif;transform:scaleX(1.0220);text-underline-offset:1.6px;text-decoration-thickness:1.8px;"><u>D</u>B Navigator</span>
<span class="t" style="left:937px;top:12.2px;font-size:19px;color:#000;font-family:'Liberation Sans','Noto Sans CJK SC',sans-serif;transform:scaleX(1.0232);text-underline-offset:1.6px;text-decoration-thickness:1.8px;"><u>H</u>elp</span>
<span class="t" style="left:1024.5px;top:13px;font-size:18px;color:#6b6b6b;font-family:'Liberation Sans','Noto Sans CJK SC',sans-serif;transform:scaleX(1.0761);">dateUtil - Test.java</span>
<span class="t" style="left:20.5px;top:54px;font-size:19px;color:#000;font-family:'Liberation Sans','Noto Sans CJK SC',sans-serif;font-weight:bold;transform:scaleX(0.9901);">dateUtil</span>
<span class="t" style="left:115.5px;top:54px;font-size:19px;color:#000;font-family:'Liberation Sans','Noto Sans CJK SC',sans-serif;transform:scaleX(0.8962);">src</span>
<span class="t" style="left:163px;top:54px;font-size:19px;color:#000;font-family:'Liberation Sans','Noto Sans CJK SC',sans-serif;">com</span>
<span class="t" style="left:224px;top:54px;font-size:19px;color:#000;font-family:'Liberation Sans','Noto Sans CJK SC',sans-serif;transform:scaleX(0.9147);">aaa</span>
<span class="t" style="left:278px;top:54px;font-size:19px;color:#000;font-family:'Liberation Sans','Noto Sans CJK SC',sans-serif;transform:scaleX(1.0286);">test</span>
<span class="t" style="left:359px;top:54px;font-size:19px;color:#000;font-family:'Liberation Sans','Noto Sans CJK SC',sans-serif;transform:scaleX(0.9954);">Test</span>
<span class="t" style="left:443.5px;top:54px;font-size:19px;color:#000;font-family:'Liberation Sans','Noto Sans CJK SC',sans-serif;transform:scaleX(1.0076);">main</span>
<span class="t" style="left:1336.5px;top:55.9px;font-size:19px;color:#000;font-family:'Liberation Sans','Noto Sans CJK SC',sans-serif;transform:scaleX(0.9840);">Test</span>
<span class="t" style="left:83.6px;top:98.8px;font-size:19px;color:#000;font-family:'Liberation Sans','Noto Sans CJK SC',sans-serif;transform:scaleX(1.0078);">Project</span>
<span class="t" style="left:100.7px;top:133px;font-size:19px;color:#000;font-family:'Liberation Sans','Noto Sans CJK SC',sans-serif;font-weight:bold;transform:scaleX(0.9858);">dateUtil</span>
<span class="t" style="left:180px;top:133px;font-size:19px;color:#8c8c8c;font-family:'Liberation Sans','Noto Sans CJK SC',sans-serif;transform:scaleX(1.0080);">D:\java\idea_space\date</span>
<span class="t" style="left:126.8px;top:163px;font-size:19px;color:#000;font-family:'Liberation Sans','Noto Sans CJK SC',sans-serif;transform:scaleX(0.9757);">.idea</span>
<span class="t" style="left:127px;top:193px;font-size:19px;color:#000;font-family:'Liberation Sans','Noto Sans CJK SC',sans-serif;transform:scaleX(1.0900);">out</span>
<span class="t" style="left:127px;top:223px;font-size:19px;color:#000;font-family:'Liberation Sans','Noto Sans CJK SC',sans-serif;transform:scaleX(0.9081);">src</span>
<span class="t" style="left:154px;top:253px;font-size:19px;color:#000;font-family:'Liberation Sans','Noto Sans CJK SC',sans-serif;transform:scaleX(0.9647);">com.aaa</span>
<span class="t" style="left:181.4px;top:283px;font-size:19px;color:#000;font-family:'Liberation Sans','Noto Sans CJK SC',sans-serif;transform:scaleX(1.0220);">test</span>
<span class="t" style="left:181.4px;top:313px;font-size:19px;color:#000;font-family:'Liberation Sans','Noto Sans CJK SC',sans-serif;transform:scaleX(1.0948);">util</span>
<span class="t" style="left:126.8px;top:343px;font-size:19px;color:#000;font-family:'Liberation Sans','Noto Sans CJK SC',sans-serif;transform:scaleX(1.0555);">dateUtil.iml</span>
<span class="t" style="left:100.6px;top:373px;font-size:19px;color:#000;font-family:'Liberation Sans','Noto Sans CJK SC',sans-serif;transform:scaleX(0.9835);">External Libraries</span>
<span class="t" style="left:100.6px;top:403px;font-size:19px;color:#000;font-family:'Liberation Sans','Noto Sans CJK SC',sans-serif;transform:scaleX(0.9648);">Scratches and Consoles</span>
<span class="t" style="left:430px;top:99px;font-size:19px;color:#000;font-family:'Liberation Sans','Noto Sans CJK SC',sans-serif;transform:scaleX(1.0100);">DateConvertUtil.java</span>
<span class="t" style="left:681.5px;top:99px;font-size:19px;color:#000;font-family:'Liberation Sans','Noto Sans CJK SC',sans-serif;transform:scaleX(1.0141);">StringUtils.java</span>
<span class="t" style="left:887px;top:99px;font-size:19px;color:#000;font-family:'Liberation Sans','Noto Sans CJK SC',sans-serif;transform:scaleX(0.9469);">Test.java</span>
<span class="t" style="left:26.3px;top:138px;font-size:18px;color:#000;font-family:'Liberation Sans','Noto Sans CJK SC',sans-serif;transform:rotate(-90deg) scaleX(0.9281);transform-origin:0 16px;">Project</span>
<span class="t" style="left:26.3px;top:282.5px;font-size:18px;color:#000;font-family:'Liberation Sans','Noto Sans CJK SC',sans-serif;transform:rotate(-90deg) scaleX(0.9007);transform-origin:0 16px;">DB Browser</span>
<span class="t" style="left:26.3px;top:766px;font-size:18px;color:#000;font-family:'Liberation Sans','Noto Sans CJK SC',sans-serif;transform:rotate(-90deg) scaleX(0.9448);transform-origin:0 16px;">Structure</span>
<span class="t" style="left:26.3px;top:909px;font-size:18px;color:#000;font-family:'Liberation Sans','Noto Sans CJK SC',sans-serif;transform:rotate(-90deg) scaleX(0.9108);transform-origin:0 16px;">Bookmarks</span>
<span class="t" style="left:1678.8px;top:117px;font-size:18px;color:#000;font-family:'Liberation Sans','Noto Sans CJK SC',sans-serif;transform:rotate(90deg) scaleX(0.9638);transform-origin:0 16px;">Notifications</span>
<span class="t" style="left:44.6px;top:762px;font-size:19px;color:#000;font-family:'Liberation Sans','Noto Sans CJK SC',sans-serif;transform:scaleX(0.9317);">Run:</span>
<span class="t" style="left:140px;top:762px;font-size:19px;color:#000;font-family:'Liberation Sans','Noto Sans CJK SC',sans-serif;transform:scaleX(0.9897);">Test</span>
<span class="t" style="left:77.5px;top:979.7px;font-size:17px;color:#000;font-family:'Liberation Sans','Noto Sans CJK SC',sans-serif;transform:scaleX(1.0143);">Version Control</span>
<span class="t" style="left:254.7px;top:979.7px;font-size:17px;color:#000;font-family:'Liberation Sans','Noto Sans CJK SC',sans-serif;transform:scaleX(0.9234);">Run</span>
<span class="t" style="left:337.7px;top:979.7px;font-size:17px;color:#000;font-family:'Liberation Sans','Noto Sans CJK SC',sans-serif;transform:scaleX(0.9342);">TODO</span>
<span class="t" style="left:439.6px;top:979.7px;font-size:17px;color:#000;font-family:'Liberation Sans','Noto Sans CJK SC',sans-serif;transform:scaleX(0.9720);">Problems</span>
<span class="t" style="left:567px;top:979.7px;font-size:17px;color:#000;font-family:'Liberation Sans','Noto Sans CJK SC',sans-serif;transform:scaleX(1.0039);">Terminal</span>
<span class="t" style="left:689.4px;top:979.7px;font-size:17px;color:#000;font-family:'Liberation Sans','Noto Sans CJK SC',sans-serif;transform:scaleX(0.9143);">Services</span>
<span class="t" style="left:803.5px;top:979.7px;font-size:17px;color:#000;font-family:'Liberation Sans','Noto Sans CJK SC',sans-serif;transform:scaleX(0.9917);">Build</span>
<span class="t" style="left:43.2px;top:1007.2px;font-size:19px;color:#000;font-family:'Liberation Sans','Noto Sans CJK SC',sans-serif;transform:scaleX(1.0067);">Build completed successfully in 9 sec, 132 ms (5 minutes ago)</span>
<span class="t" style="left:1361px;top:1007.2px;font-size:19px;color:#000;font-family:'Liberation Sans','Noto Sans CJK SC',sans-serif;transform:scaleX(0.9675);">15:20</span>
<span class="t" style="left:1426.4px;top:1007.2px;font-size:19px;color:#000;font-family:'Liberation Sans','Noto Sans CJK SC',sans-serif;transform:scaleX(0.8443);">CRLF</span>
<span class="t" style="left:1487.3px;top:1007.2px;font-size:19px;color:#000;font-family:'Liberation Sans','Noto Sans CJK SC',sans-serif;transform:scaleX(0.9382);">UTF-8</span>
<span class="t" style="left:1558.4px;top:1007.2px;font-size:19px;color:#000;font-family:'Liberation Sans','Noto Sans CJK SC',sans-serif;transform:scaleX(0.9415);">4 spaces</span>
<span class="t" style="left:407.0px;top:138px;font-size:17.5px;color:#a3a3a3;font-family:'Liberation Mono','Noto Sans CJK SC',monospace;">4</span>
<span class="t" style="left:407.0px;top:171px;font-size:17.5px;color:#a3a3a3;font-family:'Liberation Mono','Noto Sans CJK SC',monospace;">5</span>
<span class="t" style="left:407.0px;top:204px;font-size:17.5px;color:#a3a3a3;font-family:'Liberation Mono','Noto Sans CJK SC',monospace;">6</span>
<span class="t" style="left:407.0px;top:237px;font-size:17.5px;color:#a3a3a3;font-family:'Liberation Mono','Noto Sans CJK SC',monospace;">7</span>
<span class="t" style="left:407.0px;top:270px;font-size:17.5px;color:#a3a3a3;font-family:'Liberation Mono','Noto Sans CJK SC',monospace;">8</span>
<span class="t" style="left:407.0px;top:303px;font-size:17.5px;color:#a3a3a3;font-family:'Liberation Mono','Noto Sans CJK SC',monospace;">9</span>
<span class="t" style="left:396.5px;top:336px;font-size:17.5px;color:#a3a3a3;font-family:'Liberation Mono','Noto Sans CJK SC',monospace;">10</span>
<span class="t" style="left:396.5px;top:369px;font-size:17.5px;color:#a3a3a3;font-family:'Liberation Mono','Noto Sans CJK SC',monospace;">11</span>
<span class="t" style="left:396.5px;top:402px;font-size:17.5px;color:#a3a3a3;font-family:'Liberation Mono','Noto Sans CJK SC',monospace;">12</span>
<span class="t" style="left:396.5px;top:435px;font-size:17.5px;color:#a3a3a3;font-family:'Liberation Mono','Noto Sans CJK SC',monospace;">13</span>
<span class="t" style="left:396.5px;top:468px;font-size:17.5px;color:#a3a3a3;font-family:'Liberation Mono','Noto Sans CJK SC',monospace;">14</span>
<span class="t" style="left:396.5px;top:501px;font-size:17.5px;color:#8c8c8c;font-family:'Liberation Mono','Noto Sans CJK SC',monospace;">15</span>
<span class="t" style="left:396.5px;top:534px;font-size:17.5px;color:#a3a3a3;font-family:'Liberation Mono','Noto Sans CJK SC',monospace;">16</span>
<span class="t" style="left:396.5px;top:567px;font-size:17.5px;color:#a3a3a3;font-family:'Liberation Mono','Noto Sans CJK SC',monospace;">17</span>
<span class="t" style="left:396.5px;top:600px;font-size:17.5px;color:#a3a3a3;font-family:'Liberation Mono','Noto Sans CJK SC',monospace;">18</span>
<span class="t" style="left:396.5px;top:633px;font-size:17.5px;color:#a3a3a3;font-family:'Liberation Mono','Noto Sans CJK SC',monospace;">19</span>
<span class="t" style="left:485.3px;top:169px;font-size:20px;color:#000080;font-family:'Liberation Mono','Noto Sans CJK SC',monospace;font-weight:bold;">import</span>
<span class="t" style="left:557.3px;top:169px;font-size:20px;color:#000;font-family:'Liberation Mono','Noto Sans CJK SC',monospace;"> java.util.Date;</span>
<span class="t" style="left:485.3px;top:235px;font-size:20px;color:#808080;font-family:'Liberation Mono','Noto Sans CJK SC',monospace;font-style:italic;">/**</span>
<span class="t" style="left:485.3px;top:268px;font-size:20px;color:#808080;font-family:'Liberation Mono','Noto Sans CJK SC',monospace;font-style:italic;"> * </span>
<span class="t" style="left:521.3px;top:268px;font-size:20px;color:#808080;font-family:'Liberation Mono','Noto Sans CJK SC',monospace;font-weight:bold;font-style:italic;text-decoration:underline;text-underline-offset:3px;text-decoration-thickness:1.5px;">@author:</span>
<span class="t" style="left:617.3px;top:268px;font-size:20px;color:#808080;font-family:'Liberation Mono','Noto Sans CJK SC',monospace;font-style:italic;"> XYT</span>
<span class="t" style="left:485.3px;top:301px;font-size:20px;color:#808080;font-family:'Liberation Mono','Noto Sans CJK SC',monospace;font-style:italic;"> * </span>
<span class="t" style="left:521.3px;top:301px;font-size:20px;color:#808080;font-family:'Liberation Mono','Noto Sans CJK SC',monospace;font-weight:bold;font-style:italic;text-decoration:underline;text-underline-offset:3px;text-decoration-thickness:1.5px;">@create-date:</span>
<span class="t" style="left:677.3px;top:301px;font-size:20px;color:#808080;font-family:'Liberation Mono','Noto Sans CJK SC',monospace;font-style:italic;"> 2022/7/26 16:08</span>
<span class="t" style="left:485.3px;top:334px;font-size:20px;color:#808080;font-family:'Liberation Mono','Noto Sans CJK SC',monospace;font-style:italic;"> */</span>
<span class="t" style="left:485.3px;top:367px;font-size:20px;color:#000080;font-family:'Liberation Mono','Noto Sans CJK SC',monospace;font-weight:bold;">public class</span>
<span class="t" style="left:629.3px;top:367px;font-size:20px;color:#000;font-family:'Liberation Mono','Noto Sans CJK SC',monospace;"> Test { </span>
<span class="t" style="left:725.3px;top:367px;font-size:20px;color:#808080;font-family:'Liberation Mono','Noto Sans CJK SC',monospace;font-style:italic;">//</span>
<span class="t" style="left:748.5px;top:363px;font-size:18px;color:#808080;font-family:'Liberation Mono','Noto Serif CJK SC',serif;font-weight:300;font-style:italic;transform:scaleX(1.0833);">测试</span>
<span class="t" style="left:533.3px;top:400px;font-size:20px;color:#000080;font-family:'Liberation Mono','Noto Sans CJK SC',monospace;font-weight:bold;">public static void</span>
<span class="t" style="left:749.3px;top:400px;font-size:20px;color:#000;font-family:'Liberation Mono','Noto Sans CJK SC',monospace;"> main(String[] args) {</span>
<span class="t" style="left:581.3px;top:433px;font-size:20px;color:#808080;font-family:'Liberation Mono','Noto Sans CJK SC',monospace;font-style:italic;">//</span>
<span class="t" style="left:605.5px;top:429px;font-size:18px;color:#808080;font-family:'Liberation Mono','Noto Serif CJK SC',serif;font-weight:300;font-style:italic;transform:scaleX(1.0476);">日期转为字符串</span>
<span class="t" style="left:581.3px;top:466px;font-size:20px;color:#000;font-family:'Liberation Mono','Noto Sans CJK SC',monospace;">System.</span>
<span class="t" style="left:665.3px;top:466px;font-size:20px;color:#660e7a;font-family:'Liberation Mono','Noto Sans CJK SC',monospace;font-weight:bold;font-style:italic;">out</span>
<span class="t" style="left:701.3px;top:466px;font-size:20px;color:#000;font-family:'Liberation Mono','Noto Sans CJK SC',monospace;">.println(DateConvertUtil.</span>
<span class="t" style="left:1001.3px;top:466px;font-size:20px;color:#000;font-family:'Liberation Mono','Noto Sans CJK SC',monospace;font-style:italic;">getDate</span>
<span class="t" style="left:1085.3px;top:466px;font-size:20px;color:#000;font-family:'Liberation Mono','Noto Sans CJK SC',monospace;">(</span>
<span class="t" style="left:1097.3px;top:466px;font-size:20px;color:#000080;font-family:'Liberation Mono','Noto Sans CJK SC',monospace;font-weight:bold;">new</span>
<span class="t" style="left:1133.3px;top:466px;font-size:20px;color:#000;font-family:'Liberation Mono','Noto Sans CJK SC',monospace;"> Date()));</span>
<span class="t" style="left:581.3px;top:499px;font-size:20px;color:#808080;font-family:'Liberation Mono','Noto Sans CJK SC',monospace;font-style:italic;">//</span>
<span class="t" style="left:605.5px;top:495px;font-size:18px;color:#808080;font-family:'Liberation Mono','Noto Serif CJK SC',serif;font-weight:300;font-style:italic;transform:scaleX(1.0486);">日期转为固定格式的字符串</span>
<span class="t" style="left:581.3px;top:532px;font-size:20px;color:#000;font-family:'Liberation Mono','Noto Sans CJK SC',monospace;">System.</span>
<span class="t" style="left:665.3px;top:532px;font-size:20px;color:#660e7a;font-family:'Liberation Mono','Noto Sans CJK SC',monospace;font-weight:bold;font-style:italic;">out</span>
<span class="t" style="left:701.3px;top:532px;font-size:20px;color:#000;font-family:'Liberation Mono','Noto Sans CJK SC',monospace;">.println(DateConvertUtil.</span>
<span class="t" style="left:1001.3px;top:532px;font-size:20px;color:#000;font-family:'Liberation Mono','Noto Sans CJK SC',monospace;font-style:italic;">getDate</span>
<span class="t" style="left:1085.3px;top:532px;font-size:20px;color:#000;font-family:'Liberation Mono','Noto Sans CJK SC',monospace;">(</span>
<span class="t" style="left:1097.3px;top:532px;font-size:20px;color:#000080;font-family:'Liberation Mono','Noto Sans CJK SC',monospace;font-weight:bold;">new</span>
<span class="t" style="left:1133.3px;top:532px;font-size:20px;color:#000;font-family:'Liberation Mono','Noto Sans CJK SC',monospace;"> Date(),</span>
<span class="t" style="left:1240px;top:533px;font-size:17px;color:#7f7f7f;font-family:'Liberation Sans','Noto Sans CJK SC',sans-serif;transform:scaleX(1.1719);">format:</span>
<span class="t" style="left:1312px;top:532px;font-size:20px;color:#008000;font-family:'Liberation Mono','Noto Sans CJK SC',monospace;font-weight:bold;">&quot;yyyy-MM-dd HH:mm:ss&quot;</span>
<span class="t" style="left:1564px;top:532px;font-size:20px;color:#000;font-family:'Liberation Mono','Noto Sans CJK SC',monospace;">));</span>
<span class="t" style="left:533.3px;top:565px;font-size:20px;color:#000;font-family:'Liberation Mono','Noto Sans CJK SC',monospace;">}</span>
<span class="t" style="left:485.3px;top:598px;font-size:20px;color:#000;font-family:'Liberation Mono','Noto Sans CJK SC',monospace;">}</span>
<span class="t" style="left:1588.7px;top:139.5px;font-size:18px;color:#7a7a7a;font-family:'Liberation Sans','Noto Sans CJK SC',sans-serif;transform:scaleX(0.9785);">2</span>
<span class="t" style="left:138px;top:798px;font-size:20px;color:#2020f0;font-family:'Liberation Mono','Noto Sans CJK SC',monospace;text-decoration:underline;text-underline-offset:3.5px;text-decoration-thickness:1.2px;">D:\Java\jdk1.8\bin\java.exe</span>
<span class="t" style="left:474px;top:798px;font-size:20px;color:#00007f;font-family:'Liberation Mono','Noto Sans CJK SC',monospace;">&quot;-javaagent:D:\java\IntelliJ IDEA Community Edition 2022.1\lib\idea_rt.jar=63089:D:\java\IntelliJ ID</span>
<span class="t" style="left:138px;top:831px;font-size:20px;color:#000;font-family:'Liberation Mono','Noto Sans CJK SC',monospace;">2022-07-26</span>
<span class="t" style="left:138px;top:864px;font-size:20px;color:#000;font-family:'Liberation Mono','Noto Sans CJK SC',monospace;">2022-07-26 16:11:48</span>
<span class="t" style="left:138px;top:930px;font-size:20px;color:#00007f;font-family:'Liberation Mono','Noto Sans CJK SC',monospace;">Process finished with exit code 0</span>
<div style="left:1670px;top:792px;width:1px;height:177px;background:#d1d1d1"></div>
<div style="left:1671px;top:792px;width:31px;height:177px;background:#f2f2f2"></div>
<div style="left:0;top:0;width:1704px;height:1040px;box-sizing:border-box;border-top:2px solid #c2c2c2;border-left:2px solid #c8c8c8;border-right:2px solid #d2d2d2;border-radius:11px 11px 0 0;"></div>
<div style="left:0;top:782px;width:2px;height:33px;background:#5b8fd4"></div>
<div style="left:0;top:1025px;width:1704px;height:2px;background:#161616"></div>
</div>
</body></html>
